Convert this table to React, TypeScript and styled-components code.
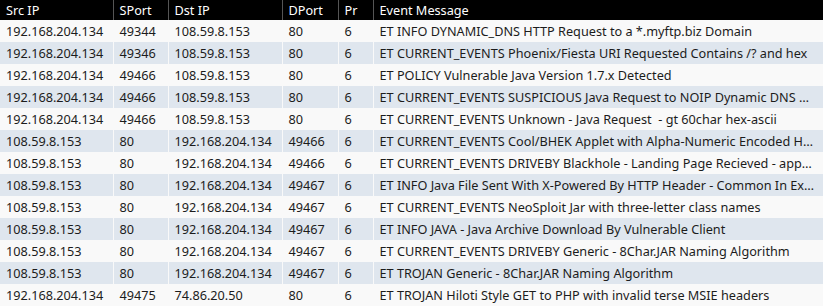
import React from "react";
import styled, { createGlobalStyle } from "styled-components";

const Global = createGlobalStyle`
  html, body { margin: 0; padding: 0; background: #f9f9f9; }
  body { font-family: "Noto Sans", "Open Sans", sans-serif; }
`;

const Table = styled.table`
  width: 823px;
  border-collapse: collapse;
  table-layout: fixed;
  font-family: "Noto Sans", "Open Sans", sans-serif;
  font-size: 12.7px;
`;

const HeadCell = styled.th<{ $w?: number; $first?: boolean }>`
  ${(p) => (p.$w ? `width: ${p.$w}px;` : "")}
  height: 20px;
  padding: 0 6px;
  background: #000;
  color: #fff;
  font-weight: normal;
  text-align: left;
  white-space: nowrap;
  box-sizing: border-box;
  border-left: ${(p) => (p.$first ? "none" : "1px solid #555")};
  line-height: 20px;
`;

const Row = styled.tr<{ $alt: boolean }>`
  background: ${(p) => (p.$alt ? "#dfe6ee" : "#f9f9f9")};
`;

const Cell = styled.td`
  height: 22px;
  padding: 0 8px 0 6px;
  color: #1c1c1c;
  white-space: pre;
  overflow: hidden;
  text-overflow: ellipsis;
  box-sizing: border-box;
  border-left: 1px solid transparent;
  &:first-child { border-left: none; }
  line-height: 22px;
`;

type Ev = [string, string, string, string, string, string];

const A = "192.168.204.134";
const B = "108.59.8.153";

const rows: Ev[] = [
  [A, "49344", B, "80", "6", "ET INFO DYNAMIC_DNS HTTP Request to a *.myftp.biz Domain"],
  [A, "49346", B, "80", "6", "ET CURRENT_EVENTS Phoenix/Fiesta URI Requested Contains /? and hex"],
  [A, "49466", B, "80", "6", "ET POLICY Vulnerable Java Version 1.7.x Detected"],
  [A, "49466", B, "80", "6", "ET CURRENT_EVENTS SUSPICIOUS Java Request to NOIP Dynamic DNS Domain"],
  [A, "49466", B, "80", "6", "ET CURRENT_EVENTS Unknown - Java Request  - gt 60char hex-ascii"],
  [B, "80", A, "49466", "6", "ET CURRENT_EVENTS Cool/BHEK Applet with Alpha-Numeric Encoded HTML entity"],
  [B, "80", A, "49466", "6", "ET CURRENT_EVENTS DRIVEBY Blackhole - Landing Page Recieved - applet and flowbit"],
  [B, "80", A, "49467", "6", "ET INFO Java File Sent With X-Powered By HTTP Header - Common In Exploit Kits"],
  [B, "80", A, "49467", "6", "ET CURRENT_EVENTS NeoSploit Jar with three-letter class names"],
  [B, "80", A, "49467", "6", "ET INFO JAVA - Java Archive Download By Vulnerable Client"],
  [B, "80", A, "49467", "6", "ET CURRENT_EVENTS DRIVEBY Generic - 8Char.JAR Naming Algorithm"],
  [B, "80", A, "49467", "6", "ET TROJAN Generic - 8Char.JAR Naming Algorithm"],
  [A, "49475", "74.86.20.50", "80", "6", "ET TROJAN Hiloti Style GET to PHP with invalid terse MSIE headers"],
];

const headers: [string, number | undefined][] = [
  ["Src IP", 113],
  ["SPort", 55],
  ["Dst IP", 114],
  ["DPort", 56],
  ["Pr", 35],
  ["Event Message", undefined],
];

export default function App() {
  return (
    <>
      <Global />
      <Table>
        <thead>
          <tr>
            {headers.map(([h, w], i) => (
              <HeadCell key={h} $w={w} $first={i === 0}>
                {h}
              </HeadCell>
            ))}
          </tr>
        </thead>
        <tbody>
          {rows.map((r, i) => (
            <Row key={i} $alt={i % 2 === 1}>
              {r.map((c, j) => (
                <Cell key={j}>{c}</Cell>
              ))}
            </Row>
          ))}
        </tbody>
      </Table>
    </>
  );
}
